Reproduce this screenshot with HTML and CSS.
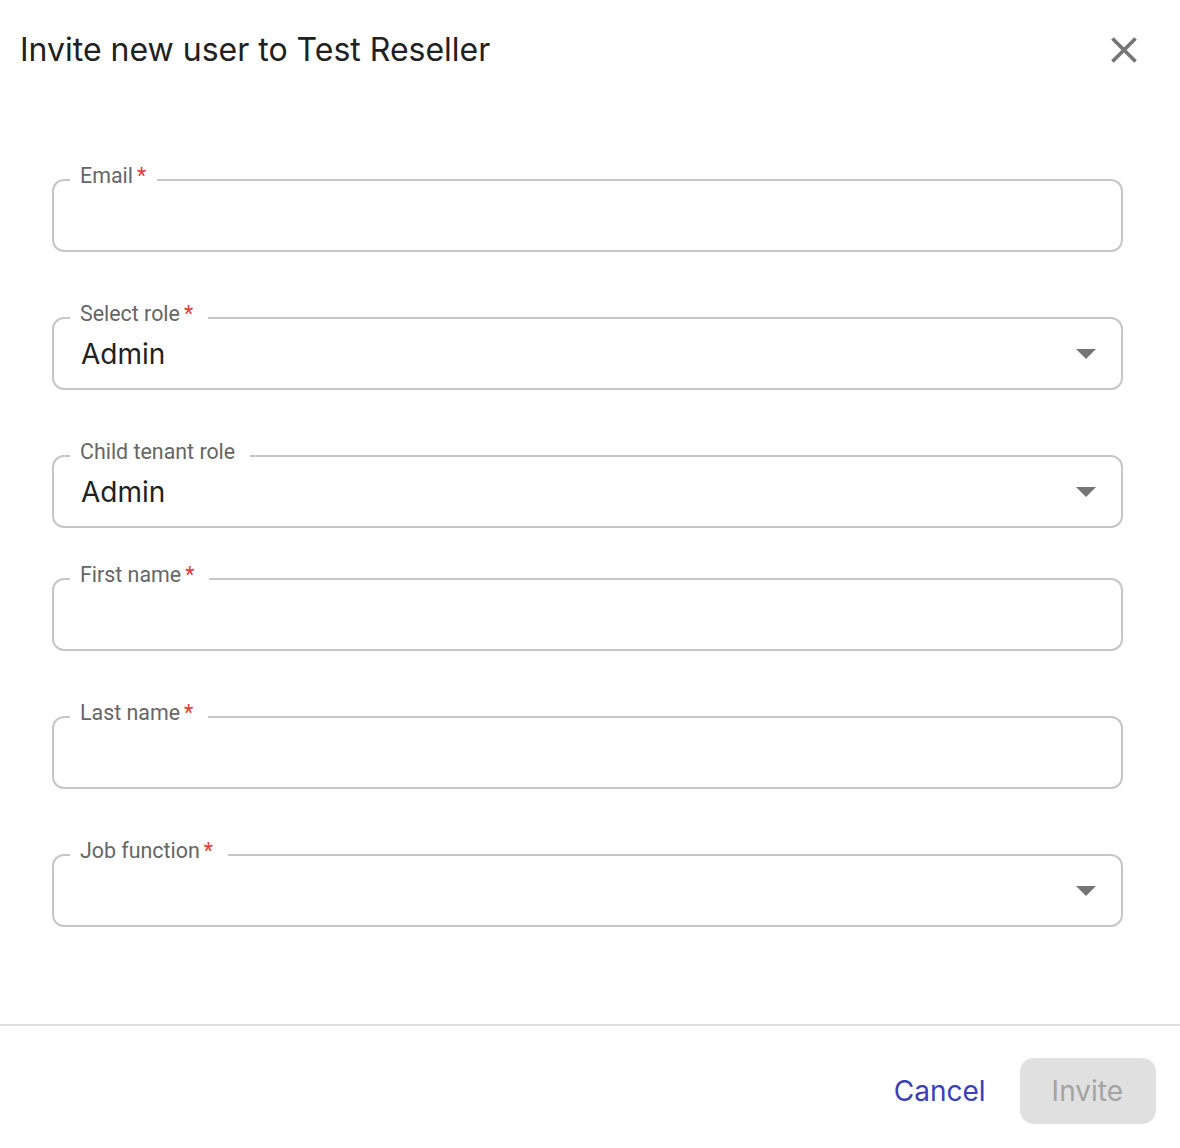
FILE: index.html
```html
<!DOCTYPE html>
<html>

<head>
    <meta charset="utf-8" />
    <title>Invite new user</title>
    <link rel="stylesheet" href="styles.css">
</head>

<body>
    <div class="dialog">
        <header class="dialog-header">
            <h1 class="dialog-title">Invite new user to Test Reseller</h1>
            <button class="close-btn" type="button" aria-label="Close">
                <svg viewBox="0 0 24 24" width="44" height="44">
                    <path d="M19 6.41 17.59 5 12 10.59 6.41 5 5 6.41 10.59 12 5 17.59 6.41 19 12 13.41 17.59 19 19 17.59 13.41 12z" />
                </svg>
            </button>
        </header>

        <form class="invite-form">
            <div class="field">
                <label class="field-label label-short">Email<span class="req">*</span></label>
                <div class="field-value"></div>
            </div>
            <div class="field">
                <label class="field-label">Select role<span class="req">*</span></label>
                <div class="field-value">Admin</div>
                <svg class="drop-arrow" viewBox="7 10 10 5" width="20" height="10"><path d="M7 10l5 5 5-5z" /></svg>
            </div>
            <div class="field">
                <label class="field-label">Child tenant role</label>
                <div class="field-value">Admin</div>
                <svg class="drop-arrow" viewBox="7 10 10 5" width="20" height="10"><path d="M7 10l5 5 5-5z" /></svg>
            </div>
            <div class="field field-tight">
                <label class="field-label">First name<span class="req">*</span></label>
                <div class="field-value"></div>
            </div>
            <div class="field">
                <label class="field-label">Last name<span class="req">*</span></label>
                <div class="field-value"></div>
            </div>
            <div class="field">
                <label class="field-label">Job function<span class="req">*</span></label>
                <div class="field-value"></div>
                <svg class="drop-arrow" viewBox="7 10 10 5" width="20" height="10"><path d="M7 10l5 5 5-5z" /></svg>
            </div>
        </form>

        <footer class="dialog-footer">
            <button class="btn btn-text" type="button">Cancel</button>
            <button class="btn btn-primary" type="button" disabled>Invite</button>
        </footer>
    </div>
</body>

</html>
```

FILE: styles.css
```css
body {
    margin: 0;
    background: #fff;
    font-family: Roboto, "Liberation Sans", sans-serif;
}

.dialog {
    display: flex;
    flex-direction: column;
    height: 1148px;
}

.dialog-header {
    display: flex;
    align-items: center;
    justify-content: space-between;
    padding: 30px 34px 0 20px;
}

.dialog-title {
    margin: 0;
    font-family: Inter, "Liberation Sans", sans-serif;
    font-size: 32px;
    line-height: 40px;
    font-weight: 400;
    color: #212121;
}

.close-btn {
    border: none;
    background: none;
    padding: 0;
    margin: -2px 0;
    display: flex;
    cursor: pointer;
}

.close-btn svg {
    fill: #757575;
}

.invite-form {
    display: flex;
    flex-direction: column;
    gap: 65px;
    padding: 109px 57px 0 52px;
}

.field {
    position: relative;
    display: flex;
    align-items: center;
    height: 73px;
    box-sizing: border-box;
    border: 2px solid #c6c6c6;
    border-radius: 12px;
}

.field-tight {
    margin-top: -15px;
}

.field-label {
    position: absolute;
    left: 16px;
    top: -17px;
    padding: 0 15px 0 10px;
    background: #fff;
    font-size: 21.4px;
    line-height: 24px;
    color: #666;
}

.label-short {
    padding-right: 11px;
}

.req {
    color: #e53935;
    margin-left: 4px;
}

.field-value {
    flex: 1;
    padding-left: 27px;
    font-family: Inter, "Liberation Sans", sans-serif;
    font-size: 28px;
    color: #212121;
}

.drop-arrow {
    fill: #757575;
    margin-right: 25px;
}

.dialog-footer {
    margin-top: auto;
    display: flex;
    justify-content: flex-end;
    align-items: center;
    gap: 18px;
    border-top: 2px solid #e0e0e0;
    padding: 32px 24px 24px;
}

.btn {
    font-family: Inter, "Liberation Sans", sans-serif;
    font-size: 28px;
    border: none;
    height: 66px;
    border-radius: 14px;
    cursor: pointer;
}

.btn-text {
    background: none;
    color: #3a40b8;
    padding: 0 16px;
}

.btn-primary {
    background: #e0e0e0;
    color: #a3a3a3;
    padding: 0 33px 0 32px;
}
```
